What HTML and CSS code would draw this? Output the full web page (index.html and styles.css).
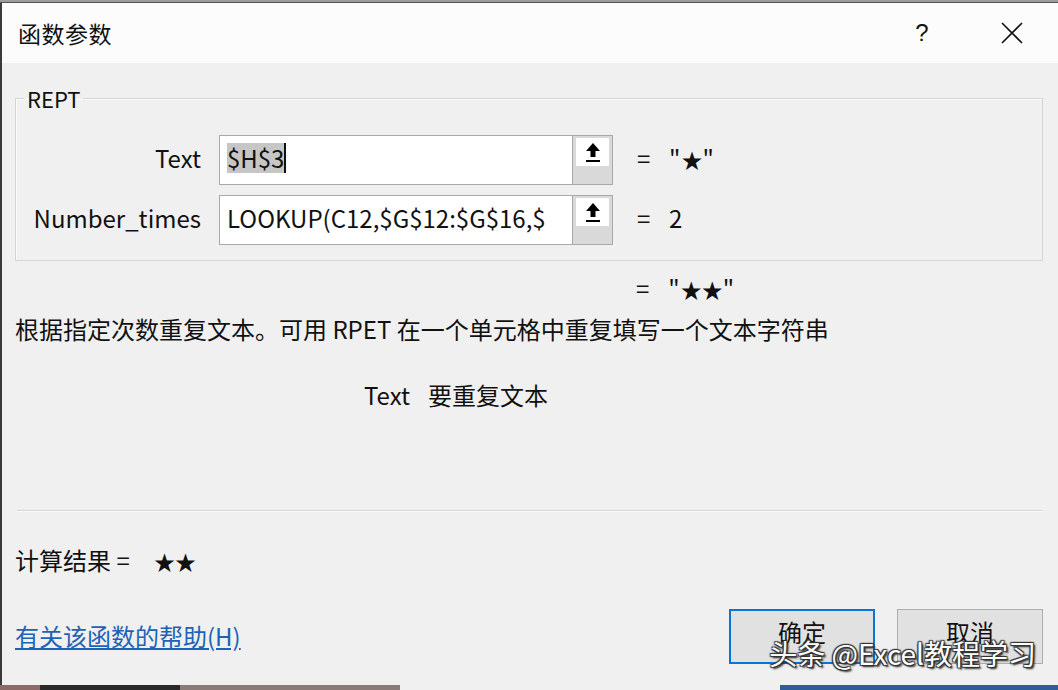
FILE: index.html
```html
<!DOCTYPE html>
<html lang="zh-CN">
  <head>
    <meta charset="UTF-8" />
    <meta name="viewport" content="width=device-width, initial-scale=1.0" />
    <title>函数参数</title>
    <link rel="stylesheet" href="styles.css">
  </head>
  <body>
    <div class="sheet-top"></div>
    <div class="dialog">
      <div class="titlebar">
        <span class="title">函数参数</span>
        <span class="title-btn help">?</span>
        <span class="title-btn close">
          <svg width="22" height="22" viewBox="0 0 22 22"><path d="M1 1 L21 21 M21 1 L1 21" stroke="#111" stroke-width="1.6" fill="none"/></svg>
        </span>
      </div>

      <div class="body">
        <fieldset class="group">
          <legend>REPT</legend>
          <div class="args">
            <label class="arg-label">Text</label>
            <div class="ref-box">
              <div class="ref-text"><span class="sel">$H$3</span><span class="caret"></span></div>
              <div class="ref-btn">
                <div class="ref-icon">
                  <svg width="18" height="24" viewBox="0 0 18 24"><path d="M9 3 L16 11 L11.5 11 L11.5 17 L6.5 17 L6.5 11 L2 11 Z" fill="#000"/><rect x="2" y="20" width="14" height="2" fill="#000"/></svg>
                </div>
              </div>
            </div>
            <span class="eq">=</span>
            <span class="val">"<span class="star">★</span>"</span>

            <label class="arg-label">Number_times</label>
            <div class="ref-box">
              <div class="ref-text">LOOKUP(C12,$G$12:$G$16,$</div>
              <div class="ref-btn">
                <div class="ref-icon">
                  <svg width="18" height="24" viewBox="0 0 18 24"><path d="M9 3 L16 11 L11.5 11 L11.5 17 L6.5 17 L6.5 11 L2 11 Z" fill="#000"/><rect x="2" y="20" width="14" height="2" fill="#000"/></svg>
                </div>
              </div>
            </div>
            <span class="eq">=</span>
            <span class="val">2</span>
          </div>
        </fieldset>

        <div class="formula-result">
          <span class="eq">=</span>
          <span class="val">"<span class="star">★★</span>"</span>
        </div>

        <p class="desc">根据指定次数重复文本。可用 RPET 在一个单元格中重复填写一个文本字符串</p>

        <p class="arg-desc"><span class="arg-name">Text</span>要重复文本</p>

        <div class="divider"></div>

        <p class="calc">计算结果 = <span class="star stars">★★</span></p>

        <div class="footer">
          <a class="help-link" href="#">有关该函数的帮助(H)</a>
          <div class="buttons">
            <button class="btn primary">确定</button>
            <button class="btn">取消</button>
          </div>
          <div class="watermark">头条 @Excel教程学习</div>
        </div>
      </div>
    </div>
    <div class="sheet-bottom">
      <span class="cell c1"></span>
      <span class="cell c2"></span>
      <span class="cell c3"></span>
      <span class="cell c4"></span>
      <span class="cell c5"></span>
    </div>
  </body>
</html>
```

FILE: styles.css
```css
html, body {
  margin: 0;
  padding: 0;
}
body {
  width: 1058px;
  height: 690px;
  overflow: hidden;
  font-family: "Noto Sans CJK SC", "Noto Sans", sans-serif;
  font-size: 24px;
  color: #111;
  background: #222;
}
.sheet-top {
  height: 3px;
  background: #9a9e9a;
  border-bottom: 1px solid #555;
  box-sizing: border-box;
}
.dialog {
  height: 682px;
  border-left: 2px solid #3a3a3a;
  background: #f0f0f0;
  display: flex;
  flex-direction: column;
}
.titlebar {
  height: 60px;
  flex: none;
  background: #fcfcfc;
  display: flex;
  align-items: center;
  padding-left: 16px;
}
.title {
  flex: 1;
  font-size: 23px;
  letter-spacing: 0.5px;
}
.title-btn {
  width: 46px;
  display: flex;
  justify-content: center;
  align-items: center;
}
.help {
  font-family: "Liberation Sans", sans-serif;
  font-size: 24px;
  margin-right: 44px;
}
.close {
  margin-right: 23px;
}
.body {
  flex: 1;
  padding: 0 15px 0 13px;
  position: relative;
}
.group {
  margin: 24px 0 0 0;
  padding: 0;
  border: 1px solid #d4d4d4;
  box-shadow: 1px 1px 0 #fafafa inset;
  height: 174px;
  box-sizing: border-box;
}
.group legend {
  margin-left: 8px;
  padding: 0 3px;
  font-size: 22px;
  line-height: 22px;
}
.args {
  display: grid;
  grid-template-columns: 185px 394px 20px auto;
  column-gap: 18px;
  row-gap: 10px;
  align-items: center;
  margin-top: 26px;
}
.args > span,
.arg-label {
  padding-bottom: 6px;
}
.arg-label {
  text-align: right;
}
.ref-box {
  height: 50px;
  display: flex;
  border: 1px solid #a9a9a9;
  background: #fff;
  box-sizing: border-box;
}
.ref-text {
  flex: 1;
  padding: 0 0 5px 7px;
  display: flex;
  align-items: center;
  white-space: nowrap;
  overflow: hidden;
}
.sel {
  background: #c6c6c6;
  line-height: 30px;
}
.caret {
  display: inline-block;
  width: 2px;
  height: 30px;
  background: #111;
}
.ref-btn {
  width: 40px;
  background: #d9d9d9;
  border-left: 1px solid #a9a9a9;
  padding: 2px 3px 0 3px;
  box-sizing: border-box;
}
.ref-icon {
  height: 28px;
  background: #fff;
  display: flex;
  justify-content: center;
  align-items: center;
}
.eq {
  margin-left: 6px;
}
.val {
  letter-spacing: 1px;
}
.star {
  font-size: 21px;
  letter-spacing: 0;
}
.formula-result {
  display: flex;
  gap: 19px;
  margin: 9px 0 0 615px;
}
.desc {
  margin: 6px 0 0 0;
}
.arg-desc {
  margin: 31px 0 0 349px;
}
.arg-name {
  margin-right: 18px;
}
.divider {
  margin: 98px 0 0 2px;
  height: 1px;
  background: #d6d6d6;
  border-bottom: 1px solid #fafafa;
}
.calc {
  margin: 30px 0 0 0;
}
.stars {
  margin-left: 19px;
}
.footer {
  display: flex;
  align-items: center;
  margin-top: 32px;
}
.help-link {
  flex: 1;
  color: #1c63b7;
  text-decoration: underline;
  margin-bottom: 2px;
}
.buttons {
  display: flex;
  gap: 22px;
}
.btn {
  width: 146px;
  height: 55px;
  padding: 0 0 10px 0;
  font-family: "Noto Sans CJK SC", sans-serif;
  font-size: 24px;
  background: #e1e1e1;
  border: 1px solid #adadad;
  color: #111;
}
.btn.primary {
  border: 2px solid #0a74d6;
}
.watermark {
  position: absolute;
  right: 22px;
  bottom: 12px;
  font-size: 28px;
  color: #fff;
  text-shadow: 1px 1px 1px #333, -1px -1px 1px #333, 1px -1px 1px #333, -1px 1px 1px #333, 2px 2px 2px #222;
  white-space: nowrap;
}
.sheet-bottom {
  height: 5px;
  display: flex;
  background: #2a2420;
}
.cell {
  height: 5px;
}
.c1 { width: 40px; background: #8c6a6a; }
.c2 { width: 140px; background: #2a2a2a; }
.c3 { width: 220px; background: #8a7a78; }
.c4 { width: 380px; background: #f0f0f0; }
.c5 { width: 278px; background: #2e5d9a; }
```
